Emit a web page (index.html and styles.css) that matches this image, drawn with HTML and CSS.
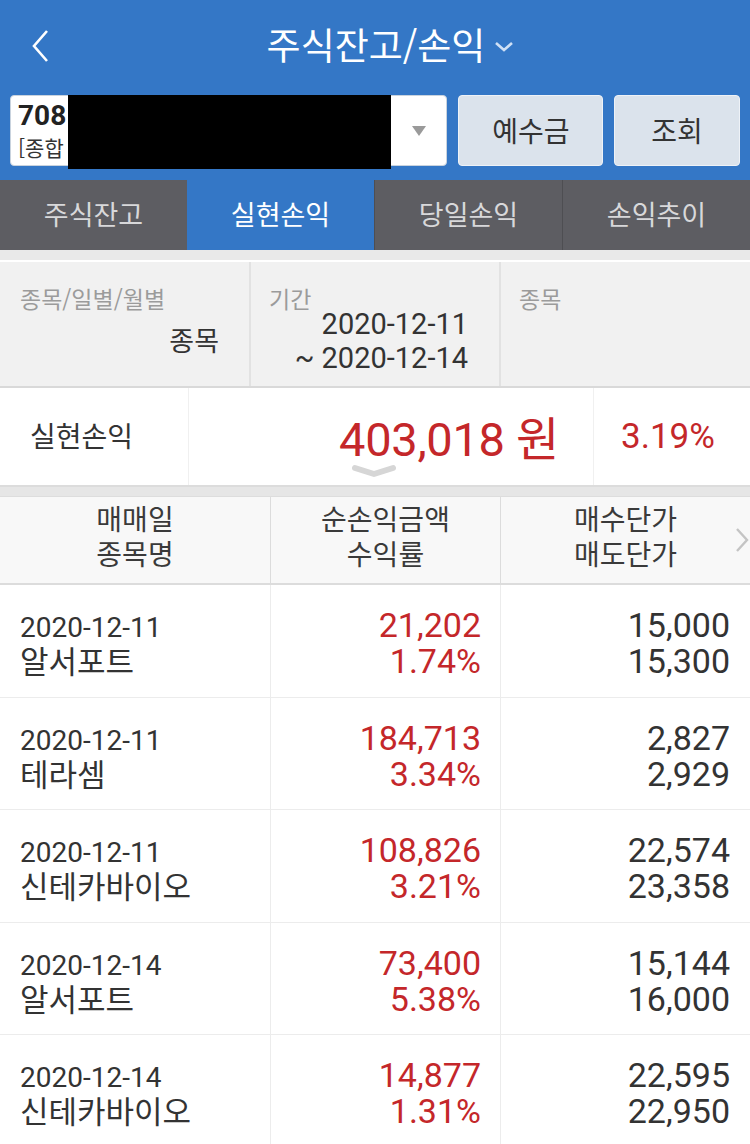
FILE: index.html
```html
<!DOCTYPE html>
<html lang="ko">
<head>
<meta charset="utf-8">
<link rel="stylesheet" href="styles.css">
</head>
<body>
<div class="page">
  <header class="appbar">
    <div class="titlebar">
      <svg class="back" width="22" height="36" viewBox="0 0 22 36"><path d="M17 3 L4 18 L17 33" fill="none" stroke="#fff" stroke-width="2.6"/></svg>
      <div class="title">주식잔고/손익<svg class="title-caret" width="22" height="14" viewBox="0 0 22 14"><path d="M3 3 L11 10 L19 3" fill="none" stroke="#cfe0f5" stroke-width="2.6"/></svg></div>
    </div>
    <div class="account-row">
      <div class="select">
        <div class="acct-no">708</div>
        <div class="acct-type">[종합</div>
        <div class="redact"></div>
        <svg class="tri" width="16" height="12" viewBox="0 0 16 12"><path d="M1 1 H15 L8 11 Z" fill="#9a9a9a"/></svg>
      </div>
      <div class="btn btn-wide">예수금</div>
      <div class="btn btn-narrow">조회</div>
    </div>
  </header>

  <nav class="tabs">
    <div class="tab">주식잔고</div>
    <div class="tab active">실현손익</div>
    <div class="tab">당일손익</div>
    <div class="tab">손익추이</div>
  </nav>

  <div class="strip"></div>

  <section class="filter">
    <div class="fcell">
      <div class="flabel">종목/일별/월별</div>
      <div class="fvalue right">종목</div>
    </div>
    <div class="fcell">
      <div class="flabel">기간</div>
      <div class="fdates">
        <div class="fline">2020-12-11</div>
        <div class="fline">~ 2020-12-14</div>
      </div>
    </div>
    <div class="fcell">
      <div class="flabel">종목</div>
    </div>
  </section>

  <section class="summary">
    <div class="s-label">실현손익</div>
    <div class="s-amount">403,018 원</div>
    <div class="s-rate">3.19%</div>
    <svg class="s-caret" width="46" height="14" viewBox="0 0 46 14"><path d="M4 4 L23 10 L42 4" fill="none" stroke="#d6d6d6" stroke-width="6" stroke-linecap="round" stroke-linejoin="round"/></svg>
  </section>

  <div class="strip2"></div>

  <section class="table">
    <div class="thead">
      <div class="th"><div class="thl">매매일</div><div class="thl">종목명</div></div>
      <div class="th"><div class="thl">순손익금액</div><div class="thl">수익률</div></div>
      <div class="th"><div class="thl">매수단가</div><div class="thl">매도단가</div>
        <svg class="more" width="14" height="26" viewBox="0 0 14 26"><path d="M2 2 L12 13 L2 24" fill="none" stroke="#c4c4c4" stroke-width="2.4"/></svg>
      </div>
    </div>

    <div class="tr">
      <div class="td c1"><div class="date">2020-12-11</div><div class="name">알서포트</div></div>
      <div class="td c2"><div class="num red">21,202</div><div class="num red">1.74%</div></div>
      <div class="td c3"><div class="num">15,000</div><div class="num">15,300</div></div>
    </div>
    <div class="tr">
      <div class="td c1"><div class="date">2020-12-11</div><div class="name">테라셈</div></div>
      <div class="td c2"><div class="num red">184,713</div><div class="num red">3.34%</div></div>
      <div class="td c3"><div class="num">2,827</div><div class="num">2,929</div></div>
    </div>
    <div class="tr">
      <div class="td c1"><div class="date">2020-12-11</div><div class="name">신테카바이오</div></div>
      <div class="td c2"><div class="num red">108,826</div><div class="num red">3.21%</div></div>
      <div class="td c3"><div class="num">22,574</div><div class="num">23,358</div></div>
    </div>
    <div class="tr">
      <div class="td c1"><div class="date">2020-12-14</div><div class="name">알서포트</div></div>
      <div class="td c2"><div class="num red">73,400</div><div class="num red">5.38%</div></div>
      <div class="td c3"><div class="num">15,144</div><div class="num">16,000</div></div>
    </div>
    <div class="tr">
      <div class="td c1"><div class="date">2020-12-14</div><div class="name">신테카바이오</div></div>
      <div class="td c2"><div class="num red">14,877</div><div class="num red">1.31%</div></div>
      <div class="td c3"><div class="num">22,595</div><div class="num">22,950</div></div>
    </div>
  </section>
</div>
</body>
</html>
```

FILE: styles.css
```css
* { box-sizing: border-box; }
html, body { margin: 0; padding: 0; }
body {
  width: 750px;
  height: 1144px;
  overflow: hidden;
  background: #ffffff;
  font-family: Roboto, "Noto Sans CJK KR", sans-serif;
  color: #333333;
}
.page { width: 750px; }

/* header */
.appbar {
  background: #3477c6;
  height: 180px;
  padding-bottom: 12px;
}
.titlebar {
  position: relative;
  height: 92px;
  display: flex;
  align-items: center;
  justify-content: center;
}
.back { position: absolute; left: 30px; top: 28px; }
.title {
  font-family: "Noto Sans CJK KR", sans-serif;
  font-size: 37px;
  color: #ffffff;
  display: flex;
  align-items: center;
  margin-left: 32px;
  margin-top: -4px;
}
.title-caret { margin-left: 8px; margin-top: 6px; }

.account-row {
  display: flex;
  gap: 11px;
  padding: 3px 10px 0 10px;
  height: 73px;
}
.select {
  position: relative;
  width: 438px;
  height: 71px;
  background: #ffffff;
  border: 1px solid #c9d3de;
  border-radius: 4px;
  padding: 3px 0 0 7px;
}
.acct-no {
  font-family: Roboto, sans-serif;
  font-weight: 700;
  font-size: 28px;
  line-height: 33px;
  color: #222;
}
.acct-type {
  font-family: "Noto Sans CJK KR", sans-serif;
  font-size: 21px;
  line-height: 30px;
  color: #333;
}
.redact {
  position: absolute;
  left: 57px;
  top: -1px;
  width: 323px;
  height: 74px;
  background: #000000;
}
.tri { position: absolute; right: 19px; top: 29px; }
.btn {
  height: 71px;
  background: #dbe3ec;
  border: 1px solid #eef2f7;
  border-radius: 4px;
  display: flex;
  align-items: center;
  justify-content: center;
  font-family: "Noto Sans CJK KR", sans-serif;
  font-size: 28px;
  color: #333;
  padding-bottom: 2px;
}
.btn-wide { width: 145px; }
.btn-narrow { width: 126px; }

/* tabs */
.tabs {
  display: flex;
  height: 70px;
  background: #5d5d62;
}
.tab {
  flex: 1;
  display: flex;
  align-items: center;
  justify-content: center;
  font-family: "Noto Sans CJK KR", sans-serif;
  font-size: 27px;
  color: #d8d8da;
  border-left: 1px solid #4e4e52;
  padding-bottom: 4px;
}
.tab:first-child { border-left: none; }
.tab.active { background: #3477c6; color: #ffffff; border-left: none; }

.strip {
  height: 12px;
  background: #e9e9e9;
  border-bottom: 2px solid #ffffff;
}

/* filter */
.filter {
  display: grid;
  grid-template-columns: 249px 250px 251px;
  height: 126px;
  background: #f1f1f1;
  border-bottom: 2px solid #d9d9d9;
}
.fcell {
  border-left: 2px solid #e2e2e2;
  padding: 21px 0 0 18px;
  position: relative;
}
.fcell:first-child { border-left: none; padding-left: 20px; }
.flabel {
  font-family: "Noto Sans CJK KR", sans-serif;
  font-size: 23px;
  line-height: 30px;
  color: #9b9b9b;
}
.fvalue {
  font-family: "Noto Sans CJK KR", sans-serif;
  font-size: 27px;
  color: #333;
  line-height: 36px;
  margin-top: 9px;
}
.fvalue.right { text-align: right; padding-right: 30px; }
.fdates {
  text-align: right;
  padding-right: 31px;
  font-family: Roboto, sans-serif;
  font-size: 29px;
  color: #333;
  margin-top: -6px;
}
.fline { height: 34px; line-height: 34px; }

/* summary */
.summary {
  position: relative;
  display: grid;
  grid-template-columns: 188px 405px 157px;
  height: 97px;
  background: #ffffff;
}
.summary > div {
  display: flex;
  align-items: center;
  border-left: 1px solid #f0f0f0;
}
.s-label {
  font-family: "Noto Sans CJK KR", sans-serif;
  font-size: 28px;
  padding-left: 30px;
  color: #333;
  padding-bottom: 4px;
  border-left: none !important;
}
.s-amount {
  justify-content: flex-end;
  padding-right: 34px;
  font-family: Roboto, "Noto Sans CJK KR", sans-serif;
  font-size: 47px;
  color: #c4272a;
  padding-bottom: 2px;
  letter-spacing: -0.3px;
}
.s-rate {
  padding-left: 27px;
  font-family: Roboto, sans-serif;
  font-size: 35px;
  color: #c4272a;
}
.s-caret { position: absolute; left: 351px; top: 76px; }

.strip2 {
  height: 11px;
  background: #e6e6e6;
  border-top: 2px solid #dcdcdc;
}

/* table */
.thead {
  display: grid;
  grid-template-columns: 270px 230px 250px;
  height: 89px;
  background: #f8f8f8;
  border-top: 1px solid #dddddd;
  border-bottom: 2px solid #dcdcdc;
}
.th {
  position: relative;
  display: flex;
  flex-direction: column;
  align-items: center;
  justify-content: center;
  font-family: Roboto, "Noto Sans CJK KR", sans-serif;
  font-size: 28px;
  color: #3a3a3a;
  border-left: 1px solid #dcdcdc;
  padding-bottom: 4px;
}
.thl { height: 35px; line-height: 35px; }
.th:first-child { border-left: none; }
.more { position: absolute; right: 1px; top: 30px; }

.tr {
  display: grid;
  grid-template-columns: 270px 230px 250px;
  height: 112.5px;
  border-bottom: 1px solid #ececec;
}
.td {
  border-left: 1px solid #ececec;
  padding-top: 22px;
}
.td.c1 { border-left: none; padding-left: 20px; padding-top: 25px; }
.td.c2 { text-align: right; padding-right: 19px; }
.td.c3 { text-align: right; padding-right: 20px; }
.date {
  font-family: Roboto, sans-serif;
  font-size: 28px;
  height: 35px;
  line-height: 35px;
  color: #333;
}
.name {
  font-family: Roboto, "Noto Sans CJK KR", sans-serif;
  font-size: 31px;
  height: 36px;
  line-height: 36px;
  color: #333;
}
.num {
  font-family: Roboto, sans-serif;
  font-size: 34px;
  height: 36px;
  line-height: 36px;
  color: #333;
}
.num.red { color: #c4272a; }
```
